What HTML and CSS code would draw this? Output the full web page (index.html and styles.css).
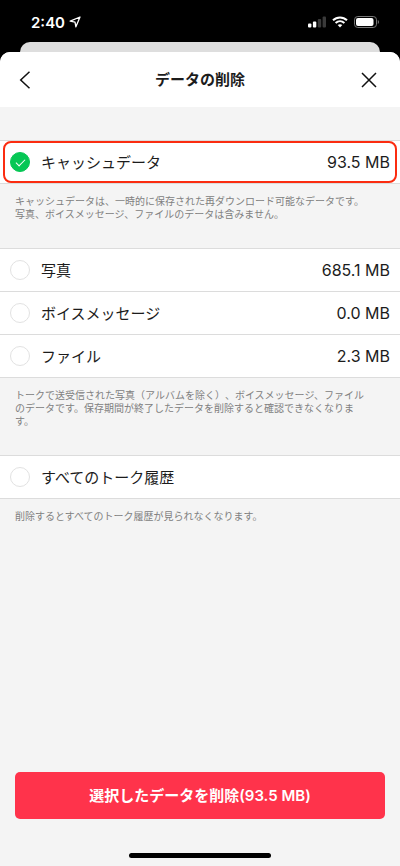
FILE: index.html
```html
<!DOCTYPE html>
<html lang="ja">
<head>
    <meta charset="UTF-8">
    <meta name="viewport" content="width=device-width, initial-scale=1.0">
    <title>データの削除</title>
    <link rel="stylesheet" href="styles.css">
</head>
<body>

    <!-- Status Bar -->
    <div class="status-bar">
        <span class="time">2:40</span>
        <svg class="location" width="12" height="12" viewBox="0 0 12 12" fill="none" stroke="#fff" stroke-width="1.3" stroke-linejoin="round">
            <path d="M11 1L1.2 5.2L6 6.1L6.9 10.8Z"/>
        </svg>
        <div class="status-icons">
            <svg width="18" height="12" viewBox="0 0 18 12">
                <rect x="0" y="7.5" width="3.4" height="4" rx="1" fill="#fff"/>
                <rect x="4.9" y="5.5" width="3.4" height="6" rx="1" fill="#fff"/>
                <rect x="9.8" y="3" width="3.4" height="8.5" rx="1" fill="#3a3a3a"/>
                <rect x="14.6" y="0.5" width="3.4" height="11" rx="1" fill="#3a3a3a"/>
            </svg>
            <svg width="16" height="12" viewBox="0 0 16 12" fill="none" stroke="#fff" stroke-width="2">
                <path d="M1 4.3C5 0.4 11 0.4 15 4.3"/>
                <path d="M3.6 7C6.2 4.6 9.8 4.6 12.4 7"/>
                <path d="M8 11.5L5.7 9.1C7 7.9 9 7.9 10.3 9.1Z" fill="#fff" stroke="none"/>
            </svg>
            <svg width="26" height="12" viewBox="0 0 26 12">
                <rect x="0.5" y="0.5" width="22" height="11" rx="3.3" fill="none" stroke="#777"/>
                <rect x="2" y="2" width="17.5" height="8" rx="2" fill="#fff"/>
                <path d="M23.8 4C25.4 4.6 25.4 7.4 23.8 8Z" fill="#777"/>
            </svg>
        </div>
    </div>

    <!-- Edge of the screen behind the sheet -->
    <div class="back-sheet"></div>

    <main class="sheet">
        <header class="header">
            <button class="icon-button" type="button" aria-label="戻る">
                <svg width="20" height="20" viewBox="0 0 20 20" fill="none" stroke="#111" stroke-width="1.5">
                    <path d="M14.5 1.7L5.7 10L14.5 18.3"/>
                </svg>
            </button>
            <h1>データの削除</h1>
            <button class="icon-button close-button" type="button" aria-label="閉じる">
                <svg width="20" height="20" viewBox="0 0 20 20" fill="none" stroke="#111" stroke-width="1.5">
                    <path d="M3 3L17 17M17 3L3 17"/>
                </svg>
            </button>
        </header>

        <form class="content">
            <div class="card highlight">
                <label class="row">
                    <input type="checkbox" checked>
                    <span class="name">キャッシュデータ</span>
                    <span class="size">93.5 MB</span>
                </label>
            </div>
            <p class="note">キャッシュデータは、一時的に保存された再ダウンロード可能なデータです。<br>写真、ボイスメッセージ、ファイルのデータは含みません。</p>

            <div class="card">
                <label class="row">
                    <input type="checkbox">
                    <span class="name">写真</span>
                    <span class="size">685.1 MB</span>
                </label>
                <label class="row">
                    <input type="checkbox">
                    <span class="name">ボイスメッセージ</span>
                    <span class="size">0.0 MB</span>
                </label>
                <label class="row">
                    <input type="checkbox">
                    <span class="name">ファイル</span>
                    <span class="size">2.3 MB</span>
                </label>
            </div>
            <p class="note">トークで送受信された写真（アルバムを除く）、ボイスメッセージ、ファイル<br>のデータです。保存期間が終了したデータを削除すると確認できなくなりま<br>す。</p>

            <div class="card">
                <label class="row">
                    <input type="checkbox">
                    <span class="name">すべてのトーク履歴</span>
                </label>
            </div>
            <p class="note">削除するとすべてのトーク履歴が見られなくなります。</p>

            <button class="delete-button" type="button">選択したデータを削除(93.5 MB)</button>
        </form>

        <div class="home-bar"></div>
    </main>

</body>
</html>
```

FILE: styles.css
```css
* {
    box-sizing: border-box;
}

body {
    margin: 0;
    min-height: 100vh;
    display: flex;
    flex-direction: column;
    background-color: #000;
    color: #1c1c1c;
    font-family: Inter, "Noto Sans CJK JP", sans-serif;
}

button {
    border: none;
    font-family: inherit;
    cursor: pointer;
}

svg {
    display: block;
}

/* Status Bar */
.status-bar {
    display: flex;
    align-items: center;
    height: 42px;
    padding: 2px 20px 0 31px;
    color: #fff;
}

.time {
    font-size: 15px;
    font-weight: 600;
}

.location {
    margin-left: 4px;
}

.status-icons {
    display: flex;
    gap: 6px;
    margin-left: auto;
}

.back-sheet {
    height: 10px;
    margin: 0 20px;
    border-radius: 10px 10px 0 0;
    background-color: #dedede;
}

/* Sheet */
.sheet {
    flex: 1;
    display: flex;
    flex-direction: column;
    border-radius: 10px 10px 0 0;
    background-color: #f4f4f4;
    overflow: hidden;
}

.header {
    display: grid;
    grid-template-columns: 1fr auto 1fr;
    align-items: center;
    height: 55px;
    padding: 0 10px;
    background-color: #fff;
}

.header h1 {
    margin: 0;
    font-size: 15px;
    font-weight: 700;
    line-height: 15px;
}

.icon-button {
    justify-self: start;
    padding: 5px;
    background: none;
}

.close-button {
    justify-self: end;
    margin-right: 6px;
}

.content {
    flex: 1;
    display: flex;
    flex-direction: column;
    padding-top: 33px;
}

/* Rows */
.card {
    position: relative;
    border-top: 1px solid #dcdcdc;
    background-color: #fff;
}

.row {
    display: flex;
    align-items: center;
    gap: 11px;
    height: 43px;
    padding: 0 10px;
    border-bottom: 1px solid #dcdcdc;
    font-size: 15px;
    line-height: 15px;
}

.row input {
    appearance: none;
    flex: none;
    width: 20px;
    height: 20px;
    margin: 0;
    border: 1px solid #e2e2e2;
    border-radius: 50%;
    background-color: #fff;
}

.row input:checked {
    display: grid;
    place-items: center;
    border-color: #06c755;
    background-color: #06c755;
}

/* Tick mark */
.row input:checked::before {
    content: "";
    width: 8px;
    height: 4px;
    margin-bottom: 2px;
    border-left: 1px solid #fff;
    border-bottom: 1px solid #fff;
    transform: rotate(-45deg);
}

.size {
    margin-left: auto;
    font-size: 16px;
}

/* Red frame round the selected row */
.highlight::after {
    content: "";
    position: absolute;
    inset: 0 3px 1px;
    border: 2px solid #fb2c10;
    border-radius: 8px;
    pointer-events: none;
}

.note {
    margin: 0;
    padding: 11px 15px 27px;
    color: #808080;
    font-size: 10px;
    line-height: 13px;
    text-spacing-trim: space-all;
}

.delete-button {
    height: 47px;
    margin: auto 15px 0;
    border-radius: 5px;
    background-color: #ff334b;
    color: #fff;
    font-size: 15px;
    font-weight: 600;
    line-height: 15px;
}

.home-bar {
    width: 142px;
    height: 5px;
    margin: 34px auto 8px;
    border-radius: 3px;
    background-color: #000;
}
```
